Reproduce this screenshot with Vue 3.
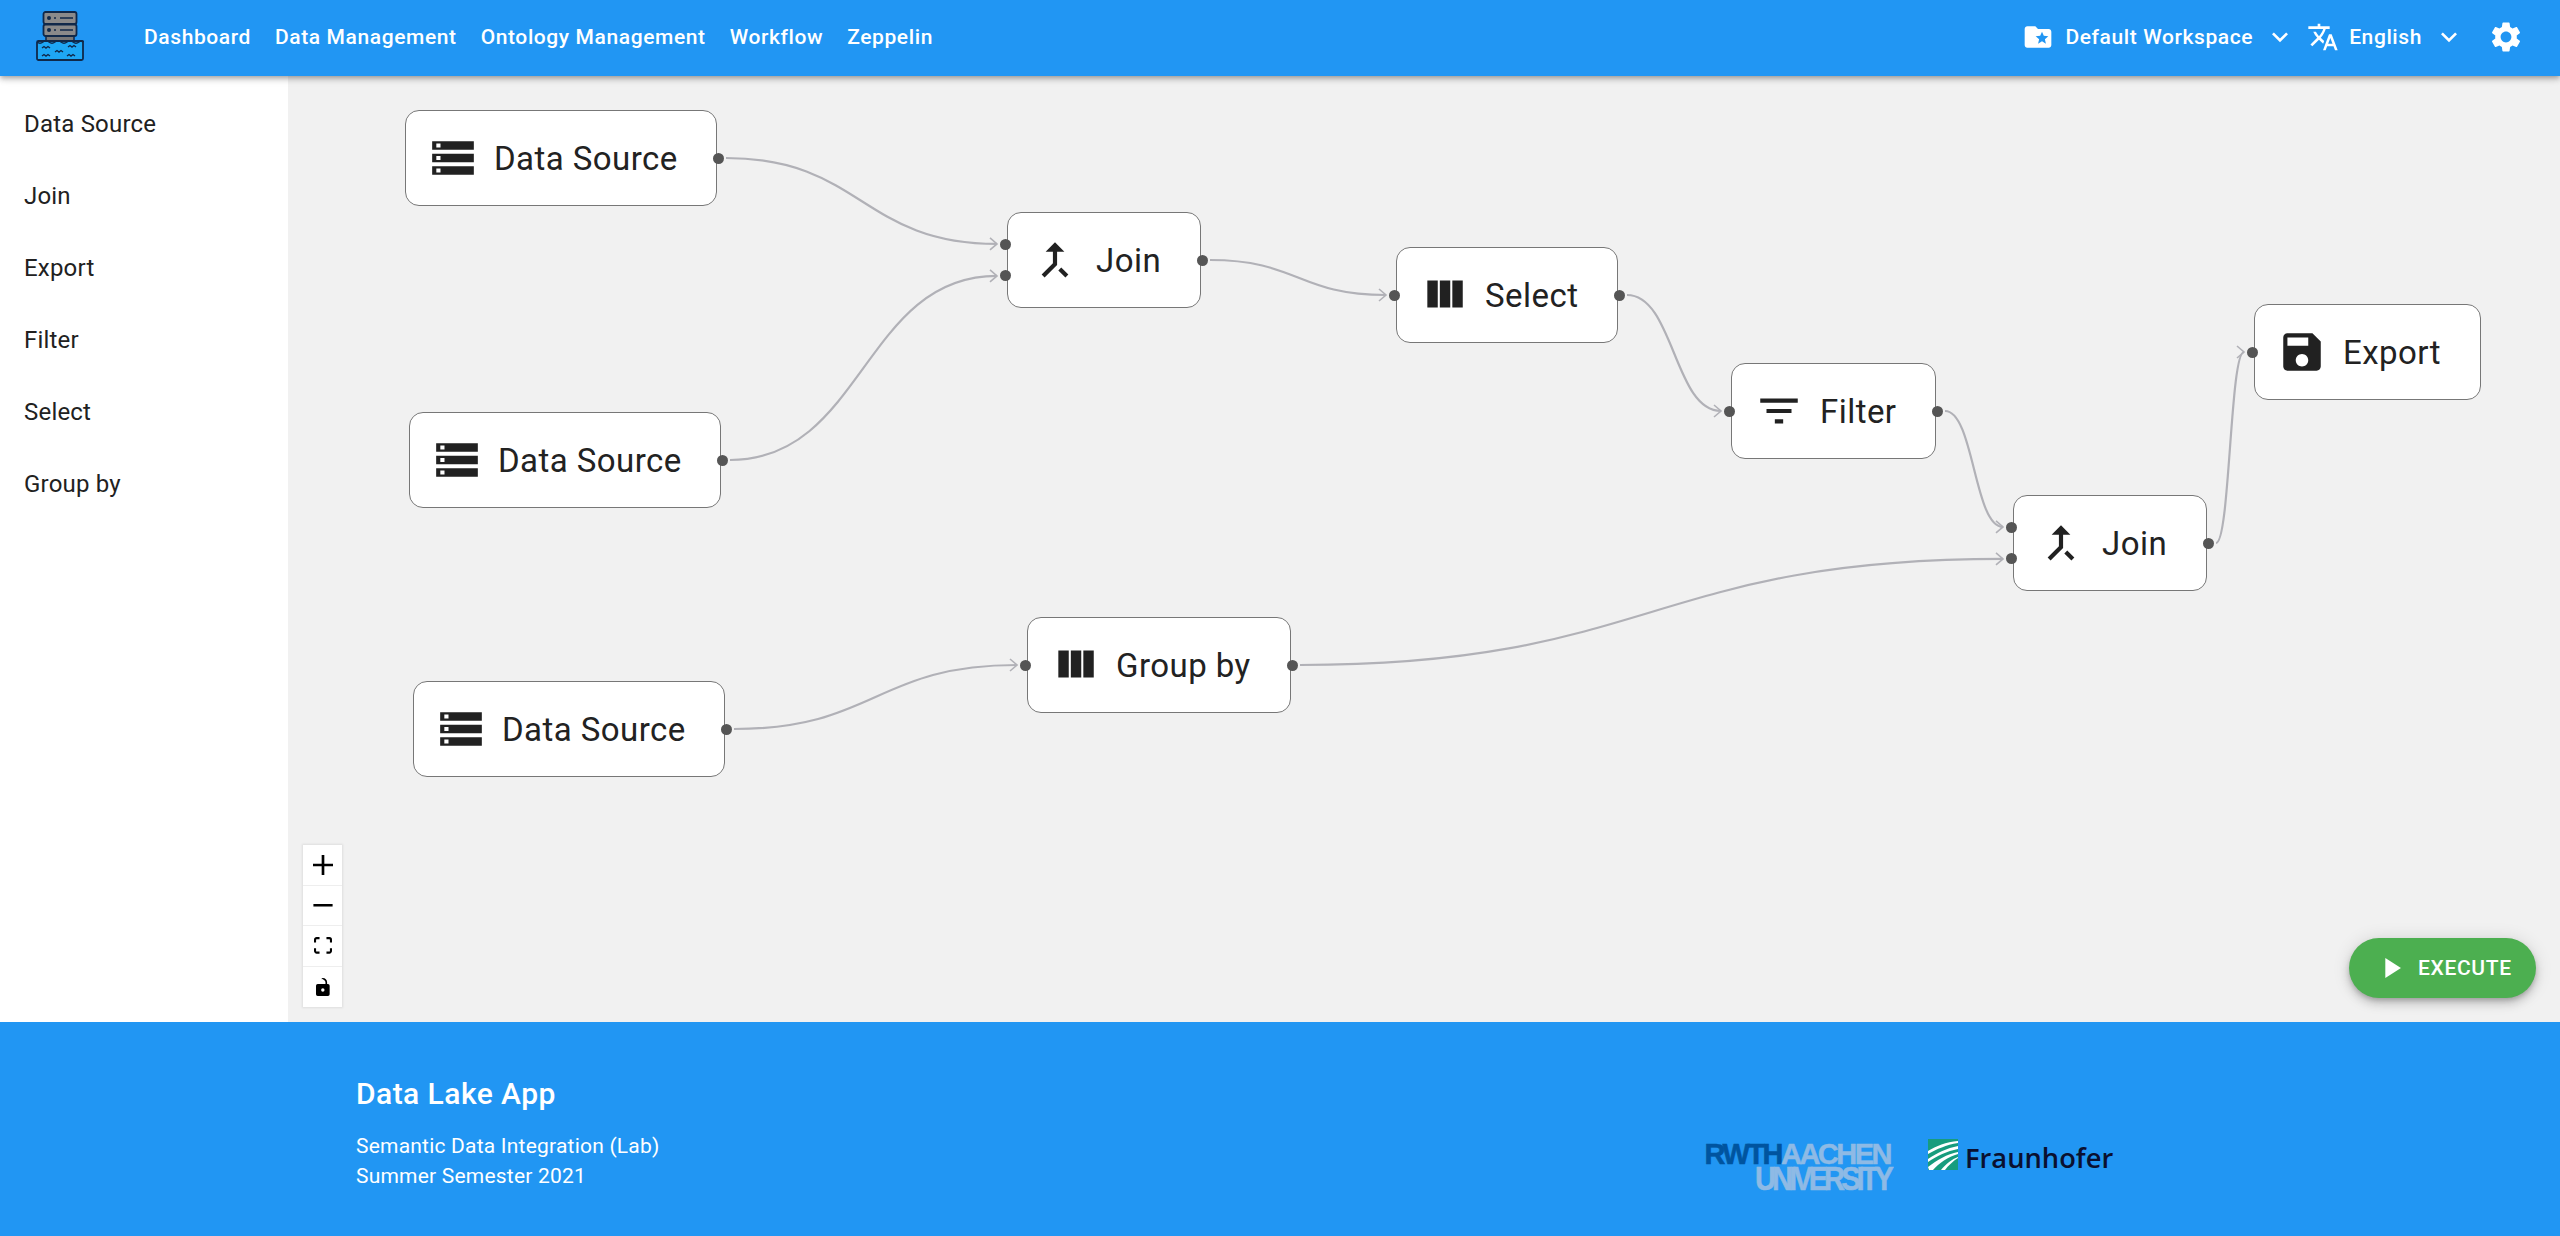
<template>
  <div class="app">
    <header class="topbar">
      <svg class="logo" viewBox="0 0 48 50" width="48" height="50">
        <path d="M10 31h28v-6H10z" fill="#777" stroke="#10294a" stroke-width="1.5" />
        <rect x="7.5" y="1" width="33" height="12" rx="2" fill="#8a8a8a" stroke="#10294a" stroke-width="1.8" />
        <rect x="7.5" y="13.5" width="33" height="11.5" rx="2" fill="#8a8a8a" stroke="#10294a" stroke-width="1.8" />
        <circle cx="13" cy="7" r="2" fill="#10294a" />
        <circle cx="13" cy="19" r="2" fill="#10294a" />
        <path d="M18 7h2M24 7h13M18 19h2M24 19h13" stroke="#10294a" stroke-width="1.6" />
        <rect x="1" y="30" width="46" height="19" rx="1.5" fill="#1ea7f5" stroke="#10294a" stroke-width="1.8" />
        <path d="M1 31q3 2.5 6 0t6 0 6 0 6 0 6 0 6 0 6 0 5 0M6 37l2-1.5 2 1.5 2-1.5 2 1.5M32 36l2-1.5 2 1.5 2-1.5 2 1.5M19 41l2-1.5 2 1.5 2-1.5 2 1.5M6 45l2-1.5 2 1.5 2-1.5 2 1.5M31 45l2-1.5 2 1.5 2-1.5 2 1.5" fill="none" stroke="#10294a" stroke-width="1.4" />
      </svg>
      <nav class="nav">
        <a v-for="item in navItems" :key="item" class="nav-link">{{ item }}</a>
      </nav>
      <div class="topbar-right">
        <svg class="bar-icon folder" viewBox="0 0 24 24"><path :d="icons.folder" /></svg>
        <span class="bar-text workspace">Default Workspace</span>
        <svg class="bar-icon chevron" viewBox="0 0 24 24"><path :d="icons.chevron" /></svg>
        <svg class="bar-icon translate" viewBox="0 0 24 24"><path :d="icons.translate" /></svg>
        <span class="bar-text lang">English</span>
        <svg class="bar-icon chevron" viewBox="0 0 24 24"><path :d="icons.chevron" /></svg>
        <svg class="bar-icon gear" viewBox="0 0 24 24"><path :d="icons.gear" /></svg>
      </div>
    </header>

    <main class="main">
      <aside class="sidebar">
        <div v-for="item in paletteItems" :key="item" class="palette-item">{{ item }}</div>
      </aside>

      <section class="canvas">
        <svg class="edges" width="2272" height="946">
          <defs>
            <marker id="arrow" markerUnits="userSpaceOnUse" markerWidth="16" markerHeight="16" refX="8" refY="8" orient="auto">
              <path d="M1 2l7 6-7 6" fill="none" stroke="#b1b1b7" stroke-width="1.6" />
            </marker>
          </defs>
          <path v-for="edge in edgePaths" :key="edge" :d="edge" class="edge" marker-end="url(#arrow)" />
        </svg>

        <div
          v-for="node in nodes"
          :key="node.id"
          class="node"
          :style="{ left: node.x - 288 + 'px', top: node.y - 76 + 'px', width: node.w + 'px' }"
        >
          <span
            v-for="(pct, i) in inputsOf(node)"
            :key="i"
            class="handle handle-in"
            :style="{ top: pct + '%' }"
          ></span>
          <svg class="node-icon" viewBox="0 0 24 24"><path :d="icons[node.icon]" /></svg>
          <span class="node-label">{{ node.label }}</span>
          <span v-if="node.id !== 'export'" class="handle handle-out"></span>
        </div>

        <div class="controls">
          <button class="ctrl"><svg width="20" height="20" viewBox="0 0 32 32"><path d="M32 18.133H18.133V32h-4.266V18.133H0v-4.266h13.867V0h4.266v13.867H32z" /></svg></button>
          <button class="ctrl"><svg width="20" height="3" viewBox="0 0 32 5"><path d="M0 0h32v4.2H0z" /></svg></button>
          <button class="ctrl"><svg width="18" height="17" viewBox="0 0 32 30"><path d="M3.692 4.63c0-.53.4-.938.939-.938h5.215V0H4.708C2.13 0 0 2.054 0 4.63v5.216h3.692V4.631zM27.354 0h-5.2v3.692h5.17c.53 0 .984.4.984.939v5.215H32V4.631A4.624 4.624 0 0027.354 0zm.954 24.83c0 .532-.4.94-.939.94h-5.215v3.768h5.215c2.577 0 4.631-2.13 4.631-4.707v-5.139h-3.692v5.139zm-23.677.94c-.531 0-.939-.4-.939-.94v-5.138H0v5.139c0 2.577 2.13 4.707 4.708 4.707h5.138V25.77H4.631z" /></svg></button>
          <button class="ctrl"><svg width="14" height="18" viewBox="0 0 25 32"><path d="M21.333 10.667H19.81V7.619C19.81 3.429 16.38 0 12.19 0c-4.114 1.828-1.37 2.133.305 2.438 1.676.305 4.42 2.59 4.42 5.181v3.048H3.047A3.056 3.056 0 000 13.714v15.238A3.056 3.056 0 003.048 32h18.285a3.056 3.056 0 003.048-3.048V13.714a3.056 3.056 0 00-3.048-3.047zM12.19 24.533a3.056 3.056 0 01-3.047-3.047 3.056 3.056 0 013.047-3.048 3.056 3.056 0 013.048 3.048 3.056 3.056 0 01-3.048 3.047z" /></svg></button>
        </div>

        <button class="execute">
          <svg class="play" viewBox="0 0 24 24"><path d="M8 5v14l11-7z" /></svg>
          EXECUTE
        </button>
      </section>
    </main>

    <footer class="footer">
      <div class="footer-text">
        <h2 class="footer-title">Data Lake App</h2>
        <p class="footer-line">Semantic Data Integration (Lab)</p>
        <p class="footer-line">Summer Semester 2021</p>
      </div>
      <div class="logos">
        <div class="rwth">
          <div class="rwth-top"><span class="rwth-dark">RWTH</span>AACHEN</div>
          <div class="rwth-bottom">UNIVERSITY</div>
        </div>
        <div class="fraunhofer">
          <svg class="fh-mark" viewBox="0 0 30 31" width="30" height="31">
            <rect width="30" height="31" fill="#179c7d" />
            <path d="M0 12C8 7 18 3 30 2v2C18 6 9 10 0 15zM0 20C9 14 19 9 30 7v3C19 12 9 17 0 23zM0 28C9 21 19 15 30 13v2C20 18 11 24 5 31H1zM13 31c5-6 11-11 17-13v1c-5 3-10 8-13 12z" fill="#fff" />
          </svg>
          <span class="fh-name">Fraunhofer</span>
        </div>
      </div>
    </footer>
  </div>
</template>

<script setup>
import { computed } from "vue";

const navItems = ["Dashboard", "Data Management", "Ontology Management", "Workflow", "Zeppelin"];
const paletteItems = ["Data Source", "Join", "Export", "Filter", "Select", "Group by"];

const icons = {
  storage: "M2 20h20v-4H2v4zm2-3h2v2H4v-2zM2 4v4h20V4H2zm4 3H4V5h2v2zm-4 7h20v-4H2v4zm2-3h2v2H4v-2z",
  merge: "M17 20.41L18.41 19 15 15.59 13.59 17 17 20.41zM7.5 8H11v5.59L5.59 19 7 20.41l6-6V8h3.5L12 3.5 7.5 8z",
  columns: "M10 18h5V5h-5v13zm-6 0h5V5H4v13zM16 5v13h5V5h-5z",
  filter: "M10 18h4v-2h-4v2zM3 6v2h18V6H3zm3 7h12v-2H6v2z",
  save: "M17 3H5c-1.11 0-2 .9-2 2v14c0 1.1.89 2 2 2h14c1.1 0 2-.9 2-2V7l-4-4zm-5 16c-1.66 0-3-1.34-3-3s1.34-3 3-3 3 1.34 3 3-1.34 3-3 3zm3-10H5V5h10v4z",
  folder: "M20 6h-8l-2-2H4c-1.1 0-1.99.9-1.99 2L2 18c0 1.1.9 2 2 2h16c1.1 0 2-.9 2-2V8c0-1.1-.9-2-2-2zm-2.06 11L15 15.28 12.06 17l.78-3.33-2.59-2.24 3.41-.29L15 8l1.34 3.14 3.41.29-2.59 2.24.78 3.33z",
  chevron: "M16.59 8.59L12 13.17 7.41 8.59 6 10l6 6 6-6z",
  translate: "M12.87 15.07l-2.54-2.51.03-.03c1.74-1.94 2.98-4.17 3.71-6.53H17V4h-7V2H8v2H1v1.99h11.17C11.5 7.92 10.44 9.75 9 11.35 8.07 10.32 7.3 9.19 6.69 8h-2c.73 1.63 1.73 3.17 2.98 4.56l-5.09 5.02L4 19l5-5 3.11 3.11.76-2.04zM18.5 10h-2L12 22h2l1.12-3h4.75L21 22h2l-4.5-12zm-2.62 7l1.62-4.33L19.12 17h-3.24z",
  gear: "M19.14 12.94c.04-.3.06-.61.06-.94 0-.32-.02-.64-.07-.94l2.03-1.58c.18-.14.23-.41.12-.61l-1.92-3.32c-.12-.22-.37-.29-.59-.22l-2.39.96c-.5-.38-1.03-.7-1.62-.94l-.36-2.54c-.04-.24-.24-.41-.48-.41h-3.84c-.24 0-.43.17-.47.41l-.36 2.54c-.59.24-1.13.57-1.62.94l-2.39-.96c-.22-.08-.47 0-.59.22L2.74 8.87c-.12.21-.08.47.12.61l2.03 1.58c-.05.3-.09.63-.09.94s.02.64.07.94l-2.03 1.58c-.18.14-.23.41-.12.61l1.92 3.32c.12.22.37.29.59.22l2.39-.96c.5.38 1.03.7 1.62.94l.36 2.54c.05.24.24.41.48.41h3.84c.24 0 .44-.17.47-.41l.36-2.54c.59-.24 1.13-.56 1.62-.94l2.39.96c.22.08.47 0 .59-.22l1.92-3.32c.12-.22.07-.47-.12-.61l-2.01-1.58zM12 15.6c-1.98 0-3.6-1.62-3.6-3.6s1.62-3.6 3.6-3.6 3.6 1.62 3.6 3.6-1.62 3.6-3.6 3.6z",
};

// page coordinates of the workflow, the canvas starts at 288,76
const nodes = [
  { id: "ds1", label: "Data Source", icon: "storage", x: 405, y: 110, w: 312 },
  { id: "ds2", label: "Data Source", icon: "storage", x: 409, y: 412, w: 312 },
  { id: "ds3", label: "Data Source", icon: "storage", x: 413, y: 681, w: 312 },
  { id: "join1", label: "Join", icon: "merge", x: 1007, y: 212, w: 194 },
  { id: "select", label: "Select", icon: "columns", x: 1396, y: 247, w: 222 },
  { id: "filter", label: "Filter", icon: "filter", x: 1731, y: 363, w: 205 },
  { id: "group", label: "Group by", icon: "columns", x: 1027, y: 617, w: 264 },
  { id: "join2", label: "Join", icon: "merge", x: 2013, y: 495, w: 194 },
  { id: "export", label: "Export", icon: "save", x: 2254, y: 304, w: 227 },
];

const NODE_H = 96;

const edges = [
  ["ds1", "join1", 0],
  ["ds2", "join1", 1],
  ["join1", "select", 0],
  ["select", "filter", 0],
  ["filter", "join2", 0],
  ["group", "join2", 1],
  ["ds3", "group", 0],
  ["join2", "export", 0],
];

function inputsOf(node) {
  if (node.id.startsWith("ds")) return [];
  if (node.id.startsWith("join")) return [33.3, 66.6];
  return [50];
}

const edgePaths = computed(() =>
  edges.map(([from, to, port]) => {
    const a = nodes.find((n) => n.id === from);
    const b = nodes.find((n) => n.id === to);
    const x1 = a.x + a.w - 288 + 9;
    const y1 = a.y + NODE_H / 2 - 76;
    const x2 = b.x - 288 - 10;
    const y2 = b.y - 76 + (NODE_H * inputsOf(b)[port]) / 100;
    const mid = (x1 + x2) / 2;
    return `M${x1} ${y1}C${mid} ${y1} ${mid} ${y2} ${x2} ${y2}`;
  })
);
</script>

<style>
html,
body {
  margin: 0;
  background: #fff;
}
</style>

<style scoped>
.app {
  display: flex;
  flex-direction: column;
  height: 1236px;
  font-family: Roboto, "Liberation Sans", sans-serif;
  overflow: hidden;
}

.topbar {
  position: relative;
  z-index: 5;
  display: flex;
  align-items: center;
  flex: 0 0 76px;
  box-sizing: border-box;
  padding: 0 40px 2px 36px;
  background: #2196f3;
  color: #fff;
  box-shadow: 0 2px 4px -1px rgba(0, 0, 0, 0.2), 0 4px 5px 0 rgba(0, 0, 0, 0.14), 0 1px 10px 0 rgba(0, 0, 0, 0.12);
}

.logo {
  margin-top: -2px;
}

.nav {
  display: flex;
  gap: 24px;
  margin-left: 60px;
}

.nav-link {
  font-size: 21px;
  font-weight: 500;
  letter-spacing: 0.6px;
}

.topbar-right {
  display: flex;
  align-items: center;
  margin-left: auto;
}

.bar-icon {
  fill: #fff;
  display: block;
}

.folder {
  width: 32px;
  height: 32px;
}

.workspace {
  margin-left: 11px;
}

.bar-text {
  font-size: 21px;
  font-weight: 500;
  letter-spacing: 0.6px;
}

.chevron {
  width: 32px;
  height: 32px;
  margin-left: 11px;
}

.translate {
  width: 32px;
  height: 32px;
  margin-left: 11px;
}

.lang {
  margin-left: 10px;
}

.gear {
  width: 36px;
  height: 36px;
  margin-left: 23px;
  margin-right: -4px;
}

.main {
  display: flex;
  flex: 1;
  min-height: 0;
}

.sidebar {
  flex: 0 0 288px;
  padding-top: 12px;
  background: #fff;
}

.palette-item {
  height: 72px;
  line-height: 72px;
  padding-left: 24px;
  font-size: 24px;
  letter-spacing: 0.2px;
  color: #212121;
}

.canvas {
  position: relative;
  flex: 1;
  background: #f1f1f1;
}

.edges {
  position: absolute;
  left: 0;
  top: 0;
}

.edge {
  fill: none;
  stroke: #b1b1b7;
  stroke-width: 2.2;
}

.node {
  position: absolute;
  display: flex;
  align-items: center;
  gap: 16px;
  box-sizing: border-box;
  height: 96px;
  padding-left: 22px;
  background: #fff;
  border: 1.5px solid #777;
  border-radius: 14px;
  color: #222;
}

.node-icon {
  flex: none;
  width: 50px;
  height: 50px;
  fill: #212121;
}

.node-label {
  font-size: 33px;
  letter-spacing: 0.45px;
  white-space: nowrap;
}

.handle {
  position: absolute;
  width: 11px;
  height: 11px;
  border-radius: 50%;
  background: #555;
}

.handle-in {
  left: -8px;
  margin-top: -5.5px;
}

.handle-out {
  right: -8px;
  top: 50%;
  margin-top: -5.5px;
}

.controls {
  position: absolute;
  left: 15px;
  bottom: 15px;
  width: 39px;
  background: #fff;
  box-shadow: 0 0 2px 1px rgba(0, 0, 0, 0.08);
}

.ctrl {
  display: flex;
  align-items: center;
  justify-content: center;
  width: 100%;
  height: 40.5px;
  padding: 0;
  background: #fff;
  border: none;
  border-bottom: 1px solid #eee;
}

.ctrl:last-child {
  border-bottom: none;
}

.execute {
  position: absolute;
  right: 24px;
  bottom: 24px;
  display: flex;
  align-items: center;
  width: 187px;
  height: 60px;
  padding: 0 0 0 25px;
  border: none;
  border-radius: 30px;
  background: #4caf50;
  color: #fff;
  font-family: inherit;
  font-size: 21px;
  font-weight: 500;
  letter-spacing: 0.65px;
  box-shadow: 0 3px 5px -1px rgba(0, 0, 0, 0.2), 0 6px 10px 0 rgba(0, 0, 0, 0.14), 0 1px 18px 0 rgba(0, 0, 0, 0.12);
}

.play {
  width: 34px;
  height: 34px;
  margin-right: 10px;
  fill: #fff;
}

.footer {
  display: flex;
  flex: 0 0 214px;
  box-sizing: border-box;
  padding: 54px 0 0 356px;
  background: #2196f3;
  color: #fff;
}

.footer-text {
  width: 1348px;
}

.footer-title {
  margin: 0 0 19px;
  font-size: 30px;
  font-weight: 500;
  letter-spacing: 0.45px;
  line-height: 36px;
}

.footer-line {
  margin: 0;
  font-size: 21px;
  letter-spacing: 0.21px;
  line-height: 30px;
}

.logos {
  display: flex;
  align-items: flex-start;
  gap: 38px;
  padding-top: 67px;
}

.rwth {
  width: 186px;
  font-family: "Liberation Sans", Arial, sans-serif;
  font-weight: 700;
  text-align: right;
  color: #8ebae5;
  line-height: 23px;
  -webkit-text-stroke: 0.5px currentColor;
}

.rwth-top {
  font-size: 29px;
  letter-spacing: -2.5px;
  white-space: nowrap;
}

.rwth-dark {
  color: #00549f;
}

.rwth-bottom {
  font-size: 29px;
  letter-spacing: -3.9px;
  white-space: nowrap;
  transform: scaleY(1.12);
  transform-origin: top;
}

.fraunhofer {
  display: flex;
  align-items: flex-end;
  gap: 7px;
  margin-top: -4px;
}

.fh-name {
  font-family: "Open Sans", "Liberation Sans", sans-serif;
  font-size: 27.3px;
  font-weight: 600;
  line-height: 31px;
  position: relative;
  top: 3px;
  color: #0a1030;
}
</style>
